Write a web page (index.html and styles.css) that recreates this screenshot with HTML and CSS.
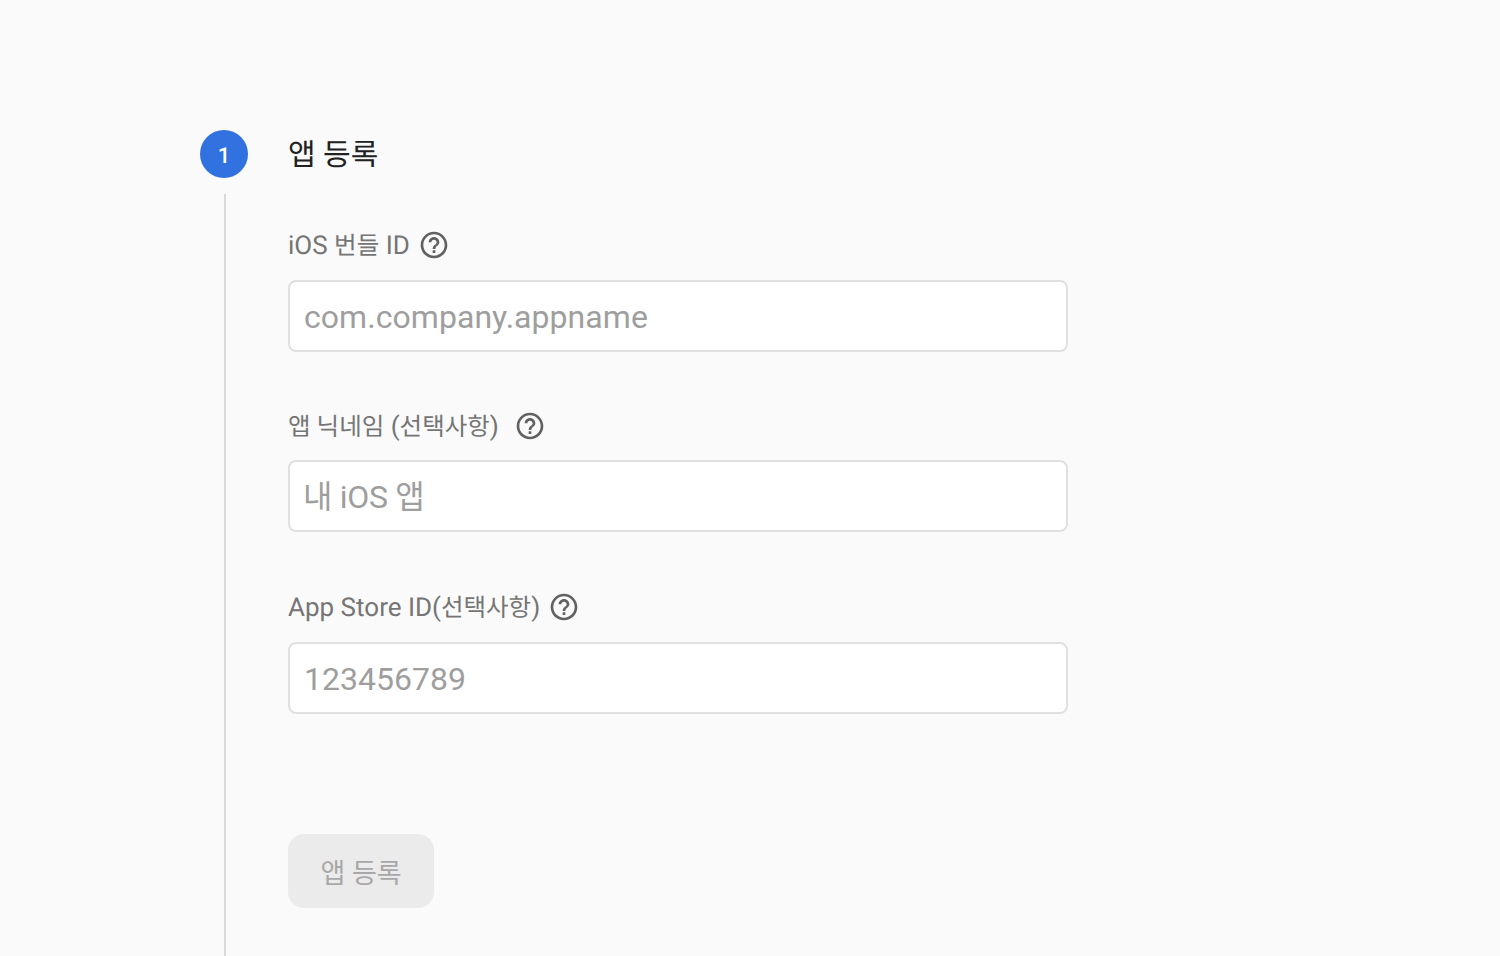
FILE: index.html
```html
<!DOCTYPE html>
<html lang="ko">
<head>
    <meta charset="UTF-8">
    <title>앱 등록</title>
    <link rel="stylesheet" href="styles.css">
</head>
<body>
    <section class="step">
        <div class="step-head">
            <span class="step-num">1</span>
            <h2 class="step-title">앱 등록</h2>
        </div>
        <div class="step-body">
            <form class="step-form">
                <div class="field">
                    <label class="field-label"><span>iOS <span class="ko">번들</span> ID</span>
                        <svg class="help" viewBox="0 0 24 24"><path d="M11 18h2v-2h-2v2zm1-16C6.48 2 2 6.48 2 12s4.48 10 10 10 10-4.48 10-10S17.52 2 12 2zm0 18c-4.41 0-8-3.59-8-8s3.59-8 8-8 8 3.59 8 8-3.59 8-8 8zm0-14c-2.21 0-4 1.79-4 4h2c0-1.1.9-2 2-2s2 .9 2 2c0 2-3 1.75-3 5h2c0-2.25 3-2.5 3-5 0-2.21-1.79-4-4-4z"/></svg>
                    </label>
                    <input class="field-input input-latin" type="text" placeholder="com.company.appname">
                </div>
                <div class="field field-nick">
                    <label class="field-label"><span><span class="ko">앱 닉네임</span> (<span class="ko">선택사항</span>)</span>
                        <svg class="help help-wide" viewBox="0 0 24 24"><path d="M11 18h2v-2h-2v2zm1-16C6.48 2 2 6.48 2 12s4.48 10 10 10 10-4.48 10-10S17.52 2 12 2zm0 18c-4.41 0-8-3.59-8-8s3.59-8 8-8 8 3.59 8 8-3.59 8-8 8zm0-14c-2.21 0-4 1.79-4 4h2c0-1.1.9-2 2-2s2 .9 2 2c0 2-3 1.75-3 5h2c0-2.25 3-2.5 3-5 0-2.21-1.79-4-4-4z"/></svg>
                    </label>
                    <input class="field-input input-ko" type="text" placeholder="내 iOS 앱">
                </div>
                <div class="field">
                    <label class="field-label"><span>App Store ID(<span class="ko">선택사항</span>)</span>
                        <svg class="help" viewBox="0 0 24 24"><path d="M11 18h2v-2h-2v2zm1-16C6.48 2 2 6.48 2 12s4.48 10 10 10 10-4.48 10-10S17.52 2 12 2zm0 18c-4.41 0-8-3.59-8-8s3.59-8 8-8 8 3.59 8 8-3.59 8-8 8zm0-14c-2.21 0-4 1.79-4 4h2c0-1.1.9-2 2-2s2 .9 2 2c0 2-3 1.75-3 5h2c0-2.25 3-2.5 3-5 0-2.21-1.79-4-4-4z"/></svg>
                    </label>
                    <input class="field-input" type="text" placeholder="123456789">
                </div>
                <button class="submit" type="button" disabled>앱 등록</button>
            </form>
        </div>
    </section>
</body>
</html>
```
FILE: styles.css
```css
* {
    box-sizing: border-box;
}

html, body {
    height: 100%;
}

body {
    margin: 0;
    overflow: hidden;
    background-color: #fafafa;
    font-family: Roboto, "Noto Sans CJK KR", sans-serif;
    text-rendering: geometricPrecision;
}

.step {
    padding: 130px 0 0 200px;
}

.step-head {
    display: flex;
    align-items: center;
    height: 48px;
}

.step-num {
    display: flex;
    align-items: center;
    justify-content: center;
    width: 48px;
    height: 48px;
    padding-top: 4px;
    border-radius: 50%;
    background-color: #3171e0;
    color: #fff;
    font-size: 22px;
    font-weight: 500;
}

.step-title {
    margin: 0 0 4px 40px;
    font-size: 30px;
    font-weight: 400;
    color: #212121;
}

.step-body {
    margin: 16px 0 0 24px;
    padding: 34px 0 60px 62px;
    border-left: 2px solid #dadada;
}

.step-form {
    width: 780px;
}

.field + .field {
    margin-top: 58px;
}

.field-label {
    display: flex;
    align-items: center;
    height: 32px;
    margin-bottom: 20px;
    font-size: 26px;
    color: #757575;
}

.field + .field-nick {
    margin-top: 57px;
}

.field-nick .field-label {
    margin-bottom: 19px;
}

.ko {
    font-size: 24.5px;
}

.help {
    width: 32px;
    height: 32px;
    margin: 2px 0 0 8px;
    fill: #616161;
}

.help-wide {
    margin-left: 15px;
}

.field-input {
    display: block;
    width: 100%;
    height: 72px;
    padding: 2px 14px 0;
    border: 2px solid #e0e0e0;
    border-radius: 8px;
    background-color: #fff;
    font-family: inherit;
    font-size: 32px;
    color: #212121;
}

.field-input::placeholder {
    color: #9e9e9e;
    opacity: 1;
}

.input-latin::placeholder {
    letter-spacing: 0.05px;
}

.input-ko {
    padding-left: 13px;
}

.input-ko::placeholder {
    letter-spacing: -0.3px;
}

.submit {
    display: block;
    width: 146px;
    height: 74px;
    margin-top: 120px;
    border: none;
    border-radius: 16px;
    background-color: #ebebeb;
    font-family: inherit;
    font-size: 27px;
    color: #a8a8a8;
}
```
